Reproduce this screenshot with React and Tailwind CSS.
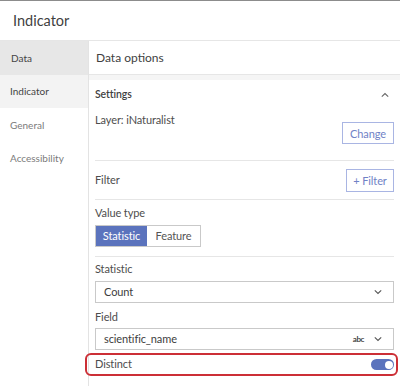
import React from "react";

function ChevronDown() {
  return (
    <svg width="10" height="6" viewBox="0 0 10 6" fill="none" stroke="#555" strokeWidth="1.1">
      <path d="M1.8 1.3 L5 4.4 L8.2 1.3" />
    </svg>
  );
}

function ChevronUp() {
  return (
    <svg width="10" height="6" viewBox="0 0 10 6" fill="none" stroke="#666" strokeWidth="1.1">
      <path d="M1.8 4.7 L5 1.6 L8.2 4.7" />
    </svg>
  );
}

function Select({ value, extra }) {
  return (
    <div className="h-[22px] border border-[#c9c9c9] bg-white flex items-center justify-between pl-[8px] pr-[10px] text-[11px] tracking-[-0.1px] text-[#3d3d3d]">
      <span>{value}</span>
      <div className="flex items-center gap-[9px]">
        {extra && <span className="text-[8px] font-bold tracking-[-0.4px] text-[#444]">abc</span>}
        <ChevronDown />
      </div>
    </div>
  );
}

export default function App() {
  return (
    <div
      className="w-[400px] h-[386px] overflow-hidden bg-white text-[#4d4d4d]"
      style={{ fontFamily: "Lato, 'Open Sans', sans-serif" }}
    >
      <div className="h-px bg-[#8c8c8c]" />
      <header className="h-[40px] border-b border-[#e6e6e6] flex items-center pl-[13px] text-[14.5px] text-[#3f3f3f]">
        Indicator
      </header>
      <div className="flex h-[345px]">
        <aside className="w-[89px] border-r border-[#e3e3e3] flex flex-col text-[10px]">
          <div className="h-[34px] bg-[#e7e7e7] flex items-center pl-[11px] text-[#444]">Data</div>
          <div className="h-[33px] bg-[#f3f3f3] flex items-center pl-[10px] text-[#444]">Indicator</div>
          <div className="h-[34px] flex items-center pl-[10px] text-[#7b7b7b]">General</div>
          <div className="h-[33px] flex items-center pl-[10px] text-[#7b7b7b]">Accessibility</div>
        </aside>
        <main className="flex-1 flex flex-col">
          <div className="h-[34px] border-b border-[#e6e6e6] flex items-center pl-[7px] text-[12px] text-[#3f3f3f]">
            Data options
          </div>
          <div className="h-[5px] bg-[#f5f5f5]" />
          <div className="px-[6px] text-[11px] tracking-[-0.1px]">
            <div className="h-[30px] flex items-center justify-between">
              <span className="font-semibold text-[10.5px] text-[#3f3f3f]">Settings</span>
              <span className="mr-[4px]"><ChevronUp /></span>
            </div>
            <div className="border-b border-[#e6e6e6] pb-[16px]">
              <div className="h-[34px] flex justify-between">
                <span className="self-start pt-[2px] leading-[16px]">Layer: iNaturalist</span>
                <button className="self-end h-[22px] w-[52px] border border-[#a9b5e3] text-[#6f82c6] text-[11px] leading-none">
                  Change
                </button>
              </div>
            </div>
            <div className="h-[39px] border-b border-[#e6e6e6] flex items-center justify-between">
              <span>Filter</span>
              <button className="h-[23px] w-[48px] border border-[#a9b5e3] text-[#6f82c6] text-[11px] leading-none">
                + Filter
              </button>
            </div>
            <div className="pt-[5px] pb-[9px] border-b border-[#e6e6e6]">
              <div className="leading-[16px]">Value type</div>
              <div className="mt-[4px] flex h-[22px] w-[106px] border border-[#c9c9c9]">
                <div className="w-[51px] bg-[#5b73bd] text-white flex items-center justify-center">Statistic</div>
                <div className="flex-1 flex items-center justify-center text-[#555]">Feature</div>
              </div>
            </div>
            <div className="pt-[4px] leading-[16px]">Statistic</div>
            <div className="mt-[4px]">
              <Select value="Count" />
            </div>
            <div className="mt-[6px] leading-[16px]">Field</div>
            <div className="mt-[3px]">
              <Select value="scientific_name" extra />
            </div>
            <div className="mt-[3px] ml-[-10px] mr-[-4px] h-[23px] border-2 border-[#cc2f36] rounded-[6px] flex items-center justify-between pl-[8px] pr-[2px]">
              <span>Distinct</span>
              <div className="w-[23px] h-[11px] rounded-full bg-[#5b73bd] flex items-center justify-end pr-[1.5px]">
                <div className="w-[8px] h-[8px] rounded-full bg-white" />
              </div>
            </div>
          </div>
        </main>
      </div>
    </div>
  );
}
